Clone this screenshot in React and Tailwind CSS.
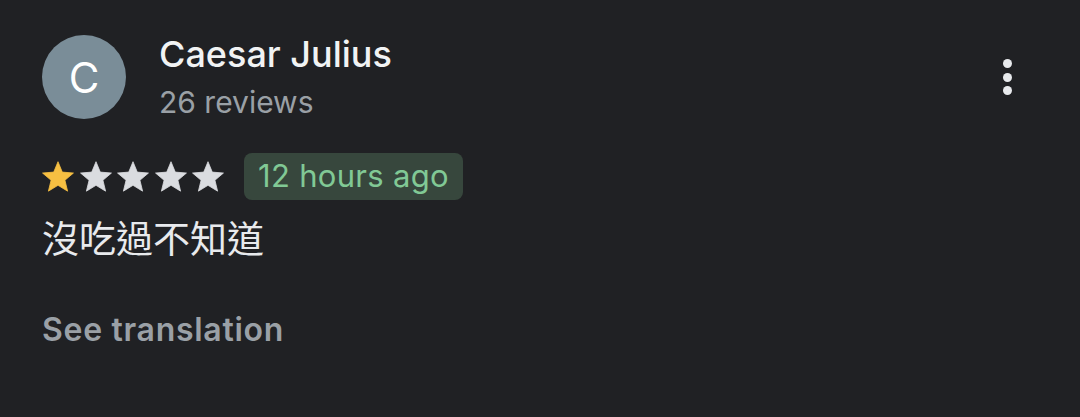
import React from "react";

function Star({ filled }) {
  return (
    <svg width="32" height="31" viewBox="0 0 24 23" className="shrink-0">
      <path
        d="M12 0.4L15.2 8.2L23.6 8.9L17.2 14.3L19.2 22.5L12 18.1L4.8 22.5L6.8 14.3L0.4 8.9L8.8 8.2Z"
        fill={filled ? "#f6bf42" : "#dadce0"}
        stroke={filled ? "#f6bf42" : "#dadce0"}
        strokeWidth="0.6"
        strokeLinejoin="round"
      />
    </svg>
  );
}

export default function App() {
  const font = { fontFamily: "Inter, 'Noto Sans CJK TC', sans-serif" };
  return (
    <div className="w-[1080px] h-[417px] bg-[#202124] pl-[42px] pr-[68px] pt-[35px]" style={font}>
      <div className="flex items-start">
        <div className="w-[84px] h-[84px] rounded-full bg-[#7a8d98] flex items-center justify-center text-[42px] text-white shrink-0">
          C
        </div>
        <div className="ml-[33px] flex-1">
          <div className="text-[36px] leading-[38px] text-[#f1f3f4] font-medium">Caesar Julius</div>
          <div className="text-[30px] leading-[32px] mt-[13px] text-[#9aa0a6]">26 reviews</div>
        </div>
        <div className="flex flex-col items-center gap-[4.5px] mt-[24px]">
          <span className="w-[9px] h-[9px] rounded-full bg-[#e8eaed]" />
          <span className="w-[9px] h-[9px] rounded-full bg-[#e8eaed]" />
          <span className="w-[9px] h-[9px] rounded-full bg-[#e8eaed]" />
        </div>
      </div>

      <div className="flex items-center mt-[34px]">
        <div className="flex items-center gap-[5.5px]">
          <Star filled />
          <Star />
          <Star />
          <Star />
          <Star />
        </div>
        <div className="ml-[20px] h-[47px] px-[14px] rounded-[8px] bg-[#37473d] text-[#81c995] text-[31px] tracking-[0.3px] flex items-center">
          12 hours ago
        </div>
      </div>

      <div className="mt-[18px] text-[37px] leading-[44px] text-[#e8eaed]">沒吃過不知道</div>

      <div className="mt-[50px] text-[32px] leading-[36px] font-semibold tracking-[0.7px] text-[#9aa0a6]">See translation</div>
    </div>
  );
}
